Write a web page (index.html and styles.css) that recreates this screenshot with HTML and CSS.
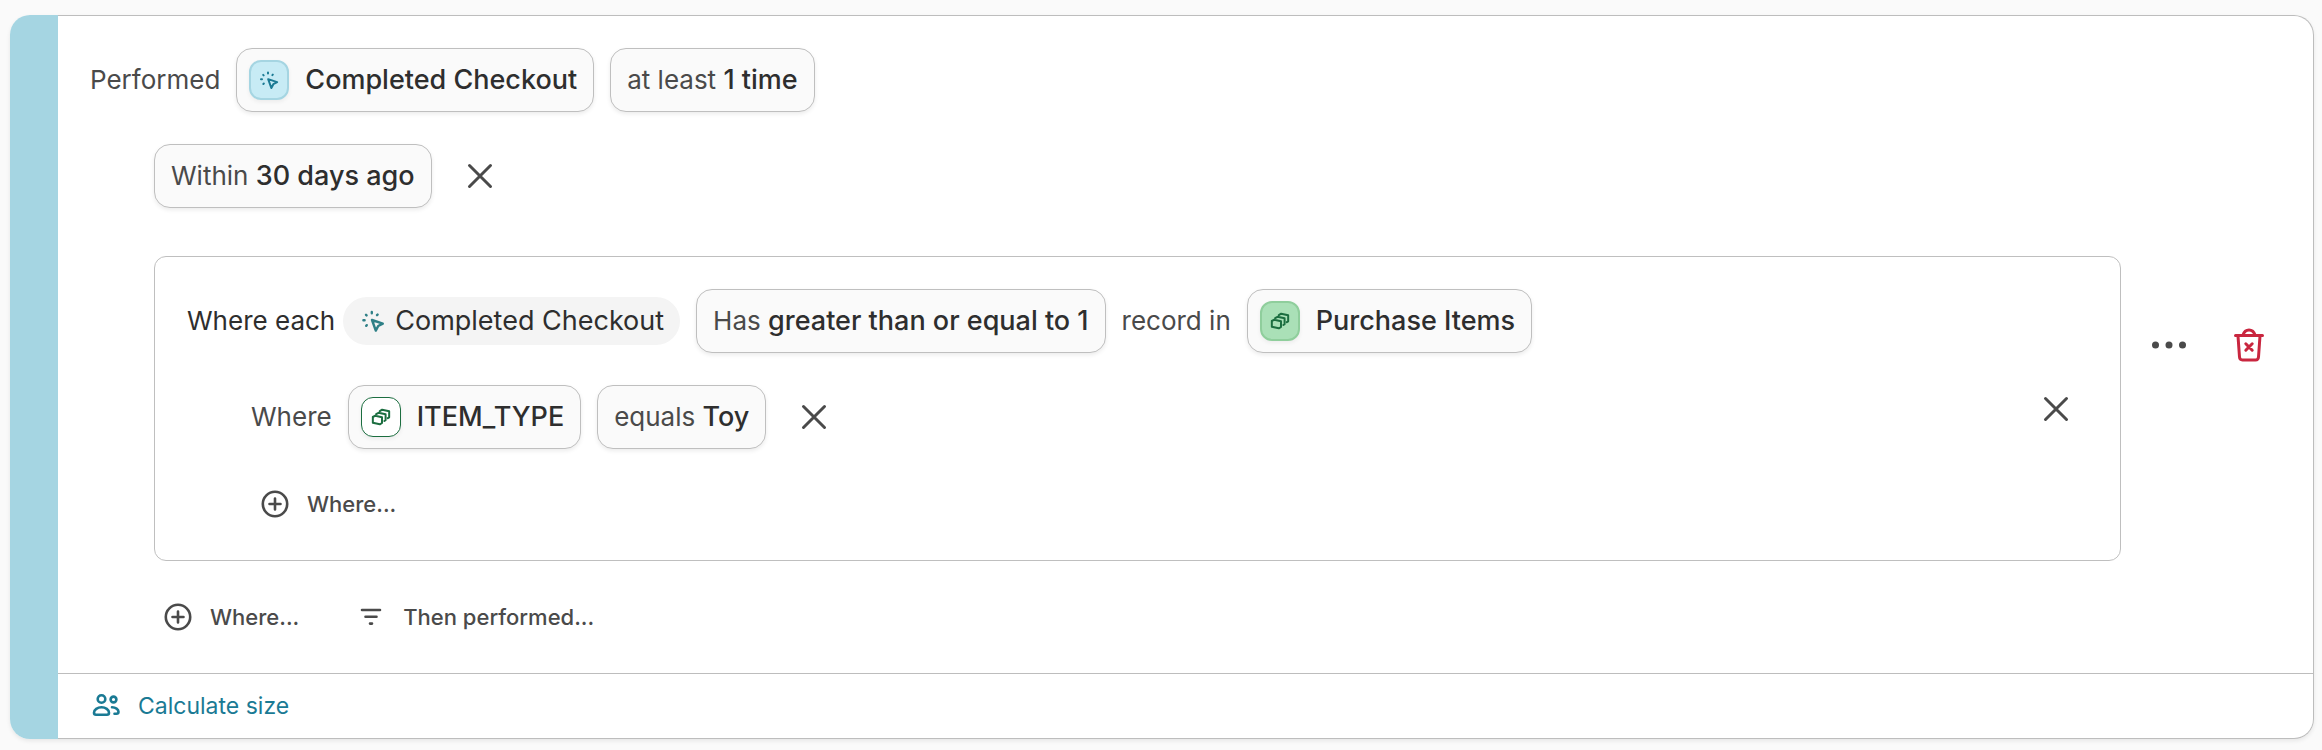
FILE: index.html
```html
<!DOCTYPE html>
<html lang="en">

<head>
    <meta charset="utf-8">
    <title>Audience conditions</title>
    <meta name="viewport" content="width=device-width, initial-scale=1">
    <link rel="stylesheet" href="styles.css">
</head>

<body>
    <!-- shared icons -->
    <svg class="sprite" aria-hidden="true">
        <symbol id="icon-event" viewBox="0 0 24 24">
            <path d="M11 11l10.800 3.600-4.600 2.400-2.400 4.600zM10.800 3v1.200M5 5.800l.6.6M2.400 11.200h1.200M5.200 16.800l.6-.6M16.600 5.600l-.6.6" />
        </symbol>
        <symbol id="icon-object" viewBox="0 0 24 24">
            <path d="M2.200 12l3-1.600 8 1.800v7l-2.600 1.600-8.400-1.800zM6.200 8.600l2.800-1.600 8.500 1.800v7l-1.500 1M10.600 5l2.800-1.800 8.400 1.800v7.400l-1.600 1" />
        </symbol>
        <symbol id="icon-close" viewBox="0 0 32 32">
            <path d="M5.500 5.500l21 21M26.500 5.500l-21 21" />
        </symbol>
        <symbol id="icon-add" viewBox="0 0 32 32">
            <circle cx="16" cy="16" r="12.200" />
            <path d="M16 10.500v11M10.500 16h11" />
        </symbol>
    </svg>

    <section class="card">
        <div class="stripe"></div>
        <div class="main">
            <div class="body">
                <div class="conditions">
                    <div class="row">
                        <span class="label">Performed</span>
                        <button type="button" class="chip has-tile">
                            <span class="tile blue"><svg><use href="#icon-event" /></svg></span>
                            <b>Completed Checkout</b>
                        </button>
                        <button type="button" class="chip">at least <b>1 time</b></button>
                    </div>

                    <div class="sub">
                        <div class="row">
                            <button type="button" class="chip">Within <b>30 days ago</b></button>
                            <button type="button" class="icon-button" aria-label="Remove time window"><svg><use href="#icon-close" /></svg></button>
                        </div>

                        <div class="group">
                            <div class="group-content">
                                <div class="row">
                                    <div class="each">
                                        <span>Where each</span>
                                        <span class="pill"><svg><use href="#icon-event" /></svg>Completed Checkout</span>
                                    </div>
                                    <button type="button" class="chip">Has <b>greater than or equal to 1</b></button>
                                    <span class="label">record in</span>
                                    <button type="button" class="chip has-tile">
                                        <span class="tile green"><svg><use href="#icon-object" /></svg></span>
                                        <b>Purchase Items</b>
                                    </button>
                                </div>
                                <div class="nested">
                                    <div class="row">
                                        <span class="label">Where</span>
                                        <button type="button" class="chip has-tile">
                                            <span class="tile outline"><svg><use href="#icon-object" /></svg></span>
                                            <b>ITEM_TYPE</b>
                                        </button>
                                        <button type="button" class="chip">equals <b>Toy</b></button>
                                        <button type="button" class="icon-button" aria-label="Remove filter"><svg><use href="#icon-close" /></svg></button>
                                    </div>
                                    <div class="adders">
                                        <button type="button" class="add"><svg><use href="#icon-add" /></svg>Where...</button>
                                    </div>
                                </div>
                            </div>
                            <button type="button" class="icon-button" aria-label="Remove group"><svg><use href="#icon-close" /></svg></button>
                        </div>

                        <div class="adders">
                            <button type="button" class="add"><svg><use href="#icon-add" /></svg>Where...</button>
                            <button type="button" class="add">
                                <svg viewBox="0 0 32 32"><path d="M7 9h18M10.500 15.800h11M15 22.600h2" /></svg>Then performed...
                            </button>
                        </div>
                    </div>
                </div>

                <div class="actions">
                    <button type="button" class="icon-button" aria-label="More">
                        <svg class="dots" viewBox="0 0 40 40"><circle cx="6.500" cy="20" r="3.500" /><circle cx="20" cy="20" r="3.500" /><circle cx="33.500" cy="20" r="3.500" /></svg>
                    </button>
                    <button type="button" class="icon-button delete" aria-label="Delete">
                        <svg viewBox="0 0 40 40"><path d="M6.500 10.500h27M9 11l1.500 21q.200 3 3 3h13q2.800 0 3-3L31 11M14 10q1.500-5 6-5t6 5M16.800 18.800l6.400 6.400M23.200 18.800l-6.400 6.400" /></svg>
                    </button>
                </div>
            </div>

            <footer class="footer">
                <button type="button" class="calculate">
                    <svg viewBox="0 0 32 32"><circle cx="11.500" cy="9" r="3.800" /><circle cx="23.500" cy="9.500" r="2.900" /><path d="M11.500 17.300c-4 0-7.500 2.500-7.500 5.500q0 2 2 2h11q2 0 2-2c0-3-3.500-5.500-7.500-5.500zM22 17.300c3.500 0 6.500 2 6.500 4.500q0 2-2 2h-2" /></svg>
                    Calculate size
                </button>
            </footer>
        </div>
    </section>
</body>

</html>
```
FILE: styles.css
```css
* {
    box-sizing: border-box;
}

body {
    margin: 0;
    padding: 15px 8px 10px 10px;
    background: #fafafa;
    color: #4a4a4a;
    font: 26px/40px Inter, "Liberation Sans", sans-serif;
}

button {
    margin: 0;
    padding: 0;
    border: 0;
    background: none;
    color: inherit;
    font: inherit;
    white-space: nowrap;
    cursor: pointer;
}

svg {
    display: block;
    flex: none;
    width: 32px;
    height: 32px;
    fill: none;
    stroke: currentColor;
    stroke-width: 3;
    stroke-linecap: round;
    stroke-linejoin: round;
}

b {
    color: #2e2e2e;
    font-size: 27px;
    font-weight: 500;
}

.sprite {
    display: none;
}

.card {
    display: flex;
    border-radius: 20px;
    background: #fff;
    box-shadow: 0 2px 4px rgba(0, 0, 0, .08);
}

.stripe {
    flex: none;
    width: 48px;
    border-radius: 20px 0 0 20px;
    background: #a5d5e2;
}

.main {
    flex: 1;
    min-width: 0;
    border: 1px solid #bdbdbd;
    border-left: 0;
    border-radius: 0 20px 20px 0;
}

.body {
    display: flex;
    align-items: center;
    gap: 16px;
    padding: 32px;
}

.conditions {
    flex: 1;
}

.row {
    display: flex;
    align-items: center;
    gap: 16px;
}

.chip {
    height: 64px;
    padding: 0 16px;
    border: 1px solid #bfbfbf;
    border-radius: 16px;
    background: #fafafa;
    box-shadow: 0 2px 4px rgba(0, 0, 0, .08);
}

.has-tile {
    display: flex;
    align-items: center;
    gap: 16px;
    padding-left: 12px;
}

.tile {
    display: flex;
    align-items: center;
    justify-content: center;
    width: 40px;
    height: 40px;
    border-radius: 12px;
    box-shadow: 0 2px 4px rgba(0, 0, 0, .06);
}

.tile svg,
.pill svg {
    stroke-width: 2.4;
}

.tile svg {
    width: 20px;
    height: 20px;
}

.blue {
    border: 2px solid #a5d5e2;
    background: #c7ebf5;
    color: #1a7a94;
}

.green {
    border: 2px solid #8fce9c;
    background: #aae0b7;
    color: #1c6e40;
}

.outline {
    border: 1px solid #1c6e40;
    background: #fff;
    color: #1c6e40;
}

.sub {
    margin: 32px 0 0 64px;
}

.icon-button {
    display: flex;
    flex: none;
    align-items: center;
    justify-content: center;
    width: 64px;
    height: 64px;
}

.group {
    display: flex;
    align-items: center;
    margin: 48px 0 32px;
    padding: 32px;
    border: 1px solid #bfbfbf;
    border-radius: 12px;
}

.group-content {
    flex: 1;
}

.each {
    display: flex;
    align-items: center;
    gap: 8px;
    color: #2e2e2e;
}

.pill {
    display: flex;
    align-items: center;
    gap: 10px;
    height: 48px;
    padding: 0 16px 0 18px;
    border-radius: 24px;
    background: #f4f4f4;
    font-size: 27px;
}

.pill svg {
    width: 24px;
    height: 24px;
    color: #2f8087;
}

.nested {
    margin: 32px 0 0 64px;
}

.adders {
    display: flex;
    gap: 24px;
}

.nested .adders {
    margin-top: 31px;
}

.add {
    display: flex;
    align-items: center;
    gap: 16px;
    height: 48px;
    padding: 0 24px 0 8px;
    font-size: 22px;
    font-weight: 500;
}

.add svg,
.calculate svg {
    stroke-width: 2.6;
}

.actions {
    display: flex;
    gap: 16px;
}

.actions svg {
    width: 40px;
    height: 40px;
}

.actions .dots {
    fill: currentColor;
    stroke: none;
}

.delete {
    color: #c9263f;
}

.footer {
    padding: 0 32px;
    border-top: 1px solid #bdbdbd;
}

.calculate {
    display: flex;
    align-items: center;
    gap: 16px;
    height: 64px;
    color: #1a7a94;
    font-size: 23px;
}
```
